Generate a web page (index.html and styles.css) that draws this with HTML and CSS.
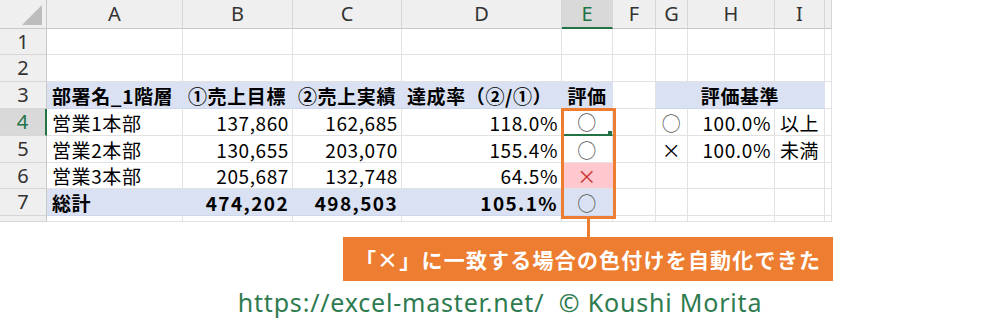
FILE: index.html
```html
<!DOCTYPE html>
<html lang="ja">
<head>
<meta charset="utf-8">
<title>Excel 条件付き書式</title>
<link rel="stylesheet" href="styles.css">
</head>
<body>
<div class="page">
  <div class="sheet">
    <div class="c corner"><span class="tri"></span></div>
    <div class="c ch">A</div>
    <div class="c ch">B</div>
    <div class="c ch">C</div>
    <div class="c ch">D</div>
    <div class="c ch sel">E</div>
    <div class="c ch">F</div>
    <div class="c ch">G</div>
    <div class="c ch">H</div>
    <div class="c ch">I</div>
    <div class="c ch"></div>

    <div class="c rh">1</div>
    <div class="c"></div><div class="c"></div><div class="c"></div><div class="c"></div><div class="c"></div><div class="c"></div><div class="c"></div><div class="c"></div><div class="c"></div><div class="c"></div>

    <div class="c rh">2</div>
    <div class="c"></div><div class="c"></div><div class="c"></div><div class="c"></div><div class="c"></div><div class="c"></div><div class="c"></div><div class="c"></div><div class="c"></div><div class="c"></div>

    <div class="c rh">3</div>
    <div class="c blue b l">部署名_1階層</div>
    <div class="c blue b l">①売上目標</div>
    <div class="c blue b l">②売上実績</div>
    <div class="c blue b l">達成率（②/①）</div>
    <div class="c blue b m">評価</div>
    <div class="c"></div>
    <div class="c blue b m span3">評価基準</div>
    <div class="c"></div>

    <div class="c rh active">4</div>
    <div class="c l">営業1本部</div>
    <div class="c r">137,860</div>
    <div class="c r">162,685</div>
    <div class="c r">118.0%</div>
    <div class="c m mark cur">○</div>
    <div class="c"></div>
    <div class="c m mark">○</div>
    <div class="c r">100.0%</div>
    <div class="c l">以上</div>
    <div class="c"></div>

    <div class="c rh">5</div>
    <div class="c l">営業2本部</div>
    <div class="c r">130,655</div>
    <div class="c r">203,070</div>
    <div class="c r">155.4%</div>
    <div class="c m mark">○</div>
    <div class="c"></div>
    <div class="c m">×</div>
    <div class="c r">100.0%</div>
    <div class="c l">未満</div>
    <div class="c"></div>

    <div class="c rh">6</div>
    <div class="c l">営業3本部</div>
    <div class="c r">205,687</div>
    <div class="c r">132,748</div>
    <div class="c r">64.5%</div>
    <div class="c m pink">×</div>
    <div class="c"></div><div class="c"></div><div class="c"></div><div class="c"></div><div class="c"></div>

    <div class="c rh">7</div>
    <div class="c blue b l">総計</div>
    <div class="c blue b r">474,202</div>
    <div class="c blue b r">498,503</div>
    <div class="c blue b r">105.1%</div>
    <div class="c blue m mark">○</div>
    <div class="c"></div><div class="c"></div><div class="c"></div><div class="c"></div><div class="c"></div>

    <div class="c rh"></div>
    <div class="c"></div><div class="c"></div><div class="c"></div><div class="c"></div><div class="c"></div><div class="c"></div><div class="c"></div><div class="c"></div><div class="c"></div><div class="c"></div>

    <div class="frame"></div>
  </div>

  <div class="callout">「×」に一致する場合の色付けを自動化できた</div>

  <div class="footer">https://excel-master.net/&nbsp;&nbsp;©&nbsp;Koushi Morita</div>
</div>
</body>
</html>
```

FILE: styles.css
```css
* {
  box-sizing: border-box;
}

html, body {
  margin: 0;
  padding: 0;
  background: #ffffff;
}

.page {
  width: 1000px;
  height: 321px;
  overflow: hidden;
  position: relative;
}

.sheet {
  position: relative;
  display: grid;
  grid-template-columns: 47px 136px 110px 109px 160px 51px 43px 32px 87px 50px 7px;
  grid-template-rows: 29px 26px 27px 27px 27px 27px 26px 27px 6px;
  width: 832px;
  height: 222px;
  overflow: hidden;
  font-family: "Noto Sans CJK JP", sans-serif;
  font-size: 19px;
  color: #000;
}

.c {
  border-right: 1px solid #e2e2e2;
  border-bottom: 1px solid #e2e2e2;
  display: flex;
  align-items: center;
  white-space: nowrap;
  overflow: hidden;
  line-height: 1;
  letter-spacing: 0.6px;
}

.ch {
  background: #efefef;
  border-right: 1px solid #d6d6d6;
  border-bottom: 1px solid #c8c8c8;
  justify-content: center;
  font-family: "Noto Sans", sans-serif;
  font-size: 20px;
  color: #333;
  letter-spacing: 0;
}

.ch.sel {
  background: #d9d9d9;
  color: #217346;
  border-bottom: 2px solid #217346;
}

.corner {
  background: #efefef;
  border-right: 1px solid #c8c8c8;
  border-bottom: 1px solid #c8c8c8;
  position: relative;
}

.tri {
  position: absolute;
  right: 4px;
  bottom: 3px;
  width: 20px;
  height: 20px;
  background: #bdbdbd;
  clip-path: polygon(100% 0, 100% 100%, 0 100%);
}

.rh {
  background: #efefef;
  border-right: 1px solid #c8c8c8;
  border-bottom: 1px solid #d6d6d6;
  justify-content: center;
  font-family: "Noto Sans", sans-serif;
  font-size: 20px;
  color: #333;
  letter-spacing: 0;
}

.rh.active {
  background: #d9d9d9;
  color: #217346;
  border-right: 2px solid #217346;
}

.l {
  justify-content: flex-start;
  padding-left: 5px;
}

.r {
  justify-content: flex-end;
  padding-right: 3px;
}

.m {
  justify-content: center;
}

.b {
  font-weight: 700;
}

.b.r {
  letter-spacing: 1.4px;
}

.blue {
  background: #d9e1f2;
  border-right-color: #d9e1f2;
  border-bottom-color: #cdd6ea;
}

.pink {
  background: #ffc7ce;
  border-right-color: #ffc7ce;
  color: #c9302c;
}

.mark {
  color: #555;
  font-size: 19px;
}

.span3 {
  grid-column: span 3;
}

.cur {
  position: relative;
  border-bottom: 2px solid #217346;
}

.cur::after {
  content: "";
  position: absolute;
  right: -2px;
  bottom: -3px;
  width: 5px;
  height: 5px;
  background: #217346;
  border: 1px solid #fff;
}

.frame {
  position: absolute;
  left: 561px;
  top: 108px;
  width: 55px;
  height: 111px;
  border: 3px solid #ed7d31;
}

.callout {
  position: relative;
  margin: 15px 0 0 343px;
  width: 490px;
  height: 44px;
  background: #ed7d31;
  color: #fff;
  font-family: "Noto Sans CJK JP", sans-serif;
  font-weight: 700;
  font-size: 21px;
  display: flex;
  align-items: center;
  justify-content: center;
  letter-spacing: 1.2px;
}

.callout::before {
  content: "";
  position: absolute;
  left: 244px;
  top: -18px;
  width: 3px;
  height: 18px;
  background: #ed7d31;
}

.footer {
  text-align: center;
  margin-top: 5px;
  font-family: "Noto Sans", sans-serif;
  font-size: 25px;
  line-height: 32px;
  letter-spacing: 0.8px;
  color: #2e7b4f;
}
```
